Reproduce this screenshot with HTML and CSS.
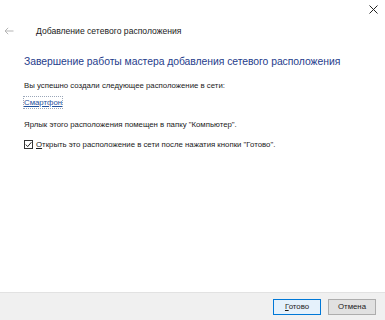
FILE: index.html
```html
<!DOCTYPE html>
<html lang="ru">
<head>
<meta charset="utf-8">
<link rel="stylesheet" href="styles.css">
</head>
<body>
<div class="window">
  <div class="topbar">
    <button class="close" aria-label="Закрыть">
      <svg width="9" height="9" viewBox="0 0 9 9"><path d="M0.5 0.5L8.5 8.5M8.5 0.5L0.5 8.5" stroke="#222" stroke-width="1" fill="none"/></svg>
    </button>
  </div>
  <div class="header">
    <span class="back">
      <svg width="10" height="8" viewBox="0 0 10 8"><path d="M9.5 4H1M4.2 0.8L1 4l3.2 3.2" stroke="#b5b5b5" stroke-width="1" fill="none"/></svg>
    </span>
    <span class="title">Добавление сетевого расположения</span>
  </div>
  <div class="content">
    <h1 class="heading">Завершение работы мастера добавления сетевого расположения</h1>
    <p class="text">Вы успешно создали следующее расположение в сети:</p>
    <a class="link" href="#">Смартфон</a>
    <p class="text shortcut">Ярлык этого расположения помещен в папку "Компьютер".</p>
    <label class="check">
      <span class="box">
        <svg width="9" height="9" viewBox="0 0 9 9"><path d="M1.8 4.6L3.7 6.6L7.4 2.2" stroke="#222" stroke-width="1" fill="none"/></svg>
      </span>
      <span><u>О</u>ткрыть это расположение в сети после нажатия кнопки "Готово".</span>
    </label>
  </div>
  <div class="footer">
    <button class="btn primary"><u>Г</u>отово</button>
    <button class="btn">Отмена</button>
  </div>
</div>
</body>
</html>
```
FILE: styles.css
```css
html, body {
  margin: 0;
  padding: 0;
  background: #ffffff;
}
body {
  font-family: "Liberation Sans", Arial, sans-serif;
  color: #1a1a1a;
}
.window {
  width: 385px;
  height: 320px;
  display: flex;
  flex-direction: column;
  background: #fff;
}
.topbar {
  height: 19px;
  display: flex;
  justify-content: flex-end;
}
.close {
  border: 0;
  background: transparent;
  width: 22px;
  height: 19px;
  padding: 0;
  margin-right: 1px;
  display: flex;
  align-items: center;
  justify-content: center;
}
.header {
  height: 23px;
  display: flex;
  align-items: center;
  padding-left: 4px;
}
.back {
  width: 32px;
  display: flex;
  align-items: center;
}
.title {
  font-size: 8.6px;
  color: #1a1a1a;
}
.content {
  flex: 1;
  padding: 12px 0 0 24px;
  display: flex;
  flex-direction: column;
  align-items: flex-start;
}
.heading {
  margin: 0;
  font-weight: normal;
  font-size: 10.4px;
  letter-spacing: -0.05px;
  color: #1f3d8c;
  line-height: 16px;
}
.text {
  margin: 10px 0 0;
  font-size: 7.8px;
  line-height: 11px;
  color: #1a1a1a;
}
.link {
  margin-top: 6px;
  font-size: 7.8px;
  line-height: 11px;
  color: #1f4f9c;
  text-decoration: underline;
  outline: 1px dotted #9aa6b8;
}
.shortcut {
  margin-top: 11px;
}
.check {
  margin-top: 9px;
  display: flex;
  align-items: center;
  gap: 3px;
  font-size: 7.8px;
  line-height: 11px;
}
.box {
  width: 9px;
  height: 9px;
  border: 1px solid #333;
  box-sizing: border-box;
  display: flex;
  align-items: center;
  justify-content: center;
}
.box svg {
  flex: none;
}
.footer {
  height: 28px;
  box-sizing: border-box;
  background: #f0f0f0;
  border-top: 1px solid #e2e2e2;
  display: flex;
  justify-content: flex-end;
  align-items: center;
  gap: 7px;
  padding-right: 9px;
}
.btn {
  width: 48px;
  height: 16px;
  padding: 0;
  font-family: "Liberation Sans", Arial, sans-serif;
  font-size: 7.8px;
  color: #1a1a1a;
  background: #e1e1e1;
  border: 1px solid #adadad;
}
.btn.primary {
  border: 1px solid #0078d7;
  background: #e5f1fb;
}
```
